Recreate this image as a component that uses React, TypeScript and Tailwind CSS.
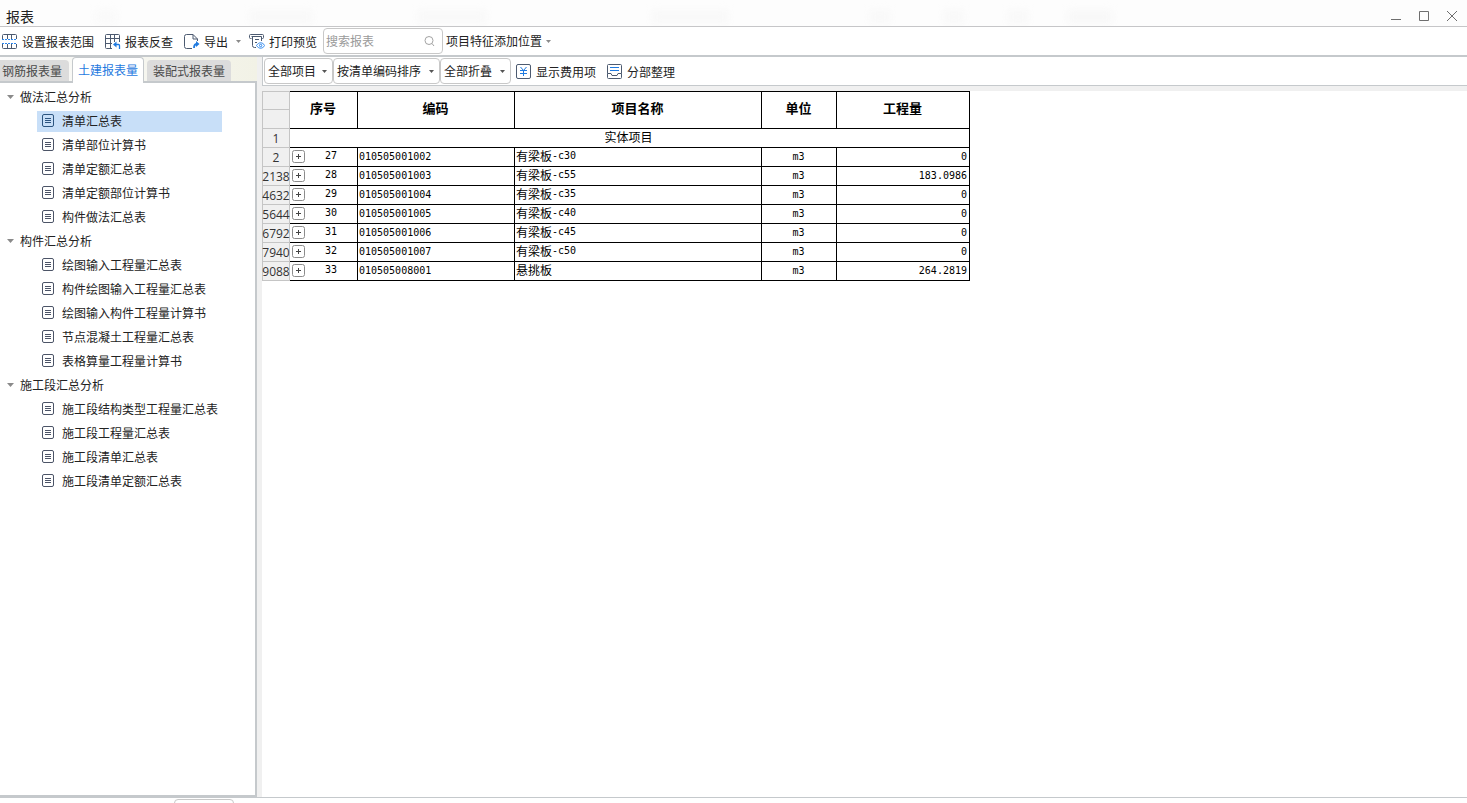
import React from "react";

const groups = [
  { name: "做法汇总分析", items: ["清单汇总表", "清单部位计算书", "清单定额汇总表", "清单定额部位计算书", "构件做法汇总表"] },
  { name: "构件汇总分析", items: ["绘图输入工程量汇总表", "构件绘图输入工程量汇总表", "绘图输入构件工程量计算书", "节点混凝土工程量汇总表", "表格算量工程量计算书"] },
  { name: "施工段汇总分析", items: ["施工段结构类型工程量汇总表", "施工段工程量汇总表", "施工段清单汇总表", "施工段清单定额汇总表"] },
];

const rows = [
  { line: "2", no: "27", code: "010505001002", name: ["有梁板", "-c30"], qty: "0" },
  { line: "2138", no: "28", code: "010505001003", name: ["有梁板", "-c55"], qty: "183.0986" },
  { line: "4632", no: "29", code: "010505001004", name: ["有梁板", "-c35"], qty: "0" },
  { line: "5644", no: "30", code: "010505001005", name: ["有梁板", "-c40"], qty: "0" },
  { line: "6792", no: "31", code: "010505001006", name: ["有梁板", "-c45"], qty: "0" },
  { line: "7940", no: "32", code: "010505001007", name: ["有梁板", "-c50"], qty: "0" },
  { line: "9088", no: "33", code: "010505008001", name: ["悬挑板", ""], qty: "264.2819" },
];

function Caret({ className = "" }: { className?: string }) {
  return (
    <svg width="5" height="3" viewBox="0 0 5 3" className={"shrink-0 " + className} aria-hidden="true">
      <path d="M0 0h5L2.5 3z" fill="currentColor" />
    </svg>
  );
}

function RangeIcon() {
  return (
    <svg width="16" height="16" viewBox="0 0 16 16" fill="none" aria-hidden="true" className="shrink-0">
      <path d="M.5 6V2.500a1 1 0 0 1 1-1h12a1 1 0 0 1 1 1V6M5.500 1.500V6M9.500 1.500V6M.5 11v3.500a1 1 0 0 0 1 1h12a1 1 0 0 0 1-1V11M5.500 11v4.500M9.500 11v4.500" stroke="#4c5a70" />
      <path d="M0 6.500h15M0 10.500h15" stroke="#2b86ee" strokeDasharray="2 1" />
    </svg>
  );
}

function TraceIcon() {
  return (
    <svg width="16" height="16" viewBox="0 0 16 16" fill="none" aria-hidden="true" className="shrink-0">
      <path d="M7 15.500H1.500a1 1 0 0 1-1-1v-12a1 1 0 0 1 1-1h12a1 1 0 0 1 1 1V9M.5 5.500h14M.5 10.500H7M5.500 1.500v14M9.500 1.500V9" stroke="#4c5a70" />
      <path d="M10 11.500h3.500a1 1 0 0 1 1 1V16" stroke="#1f7ae0" strokeWidth="1.300" />
      <path d="M11.500 8.500v6l-3.500-3z" fill="#1f7ae0" />
    </svg>
  );
}

function ExportIcon() {
  return (
    <svg width="16" height="16" viewBox="0 0 16 16" fill="none" aria-hidden="true" className="shrink-0">
      <path d="M8 15.500H2.500a2 2 0 0 1-2-2v-10a2 2 0 0 1 2-2H9L13.500 6v2M9 1.500V6h4.500" stroke="#4c5a70" />
      <path d="M10 15c0-2.800 1-4 3-4" stroke="#1f7ae0" strokeWidth="1.800" />
      <path d="M12 8l3.500 3-3.500 3z" fill="#1f7ae0" />
    </svg>
  );
}

function PreviewIcon() {
  return (
    <svg width="16" height="16" viewBox="0 0 16 16" fill="none" aria-hidden="true" className="shrink-0">
      <path d="M2.500 5.500h-1a1 1 0 0 1-1-1v-2a1 1 0 0 1 1-1h12a1 1 0 0 1 1 1v2a1 1 0 0 1-1 1h-1M2.500 3.500h10V8M3.500 3.500v9a2 2 0 0 0 2 2H7M6 6.500h4M6 9.500h2" stroke="#4c5a70" />
      <path d="M7.500 12.500c2.300-3.600 5.900-3.600 8.200 0-2.300 3.600-5.900 3.600-8.200 0z" stroke="#2b86ee" />
      <circle cx="11.600" cy="12.500" r="1.200" stroke="#2b86ee" />
    </svg>
  );
}

function YenIcon() {
  return (
    <svg width="15" height="15" viewBox="0 0 15 15" fill="none" aria-hidden="true" className="shrink-0">
      <rect x=".5" y=".5" width="14" height="14" rx="1.500" stroke="#4c5a70" />
      <path d="M4.500 3l3 3.500L10.500 3M4 6.500h7M4 9.500h7M7.500 6.500V12" stroke="#1f7ae0" />
    </svg>
  );
}

function ArrangeIcon() {
  return (
    <svg width="15" height="15" viewBox="0 0 15 15" fill="none" aria-hidden="true" className="shrink-0">
      <path d="M.5 9.500v-8a1 1 0 0 1 1-1h12a1 1 0 0 1 1 1v8M.5 9.500H4l1 2h5l1-2h3.500v4a1 1 0 0 1-1 1h-12a1 1 0 0 1-1-1z" stroke="#4c5a70" />
      <path d="M3 3.500h9M3 6.500h9" stroke="#1f7ae0" />
    </svg>
  );
}

function SheetIcon() {
  return (
    <svg width="12" height="15" viewBox="0 0 12 15" fill="none" aria-hidden="true" className="shrink-0">
      <rect x=".5" y=".5" width="11" height="12" rx="1.500" stroke="currentColor" />
      <path d="M3 4.500h6M3 6.500h6M3 8.500h6" stroke="currentColor" />
    </svg>
  );
}

function TitleBar() {
  return (
    <header className="flex h-[27px] shrink-0 items-center justify-between overflow-hidden border-b border-[#c6c6c8] bg-[#fdfdfd] pr-[9px] pl-1.5">
      <h1 className="pt-1.5 text-sm leading-5">报表</h1>
      <div aria-hidden="true" className="flex flex-1 pt-2 pl-[62px]">
        <div className="h-3 w-5 bg-[#f9f9f9] blur-xs" />
        <div className="ml-[134px] h-3 w-[62px] bg-[#f8f8f8] blur-xs" />
        <div className="ml-[106px] h-3 w-[68px] bg-[#f8f8f8] blur-xs" />
        <div className="ml-[166px] h-3 w-[76px] bg-[#f8f8f8] blur-xs" />
        <div className="ml-[142px] h-3 w-5 bg-[#f8f8f8] blur-xs" />
        <div className="ml-[54px] h-3 w-5 bg-[#f8f8f8] blur-xs" />
        <div className="ml-[44px] h-3 w-5 bg-[#f8f8f8] blur-xs" />
        <div className="ml-10 h-3 w-11 bg-[#f7f7f7] blur-xs" />
      </div>
      <div className="flex gap-4 pt-1.5 text-[#6e6e6e]">
        <button aria-label="最小化" className="size-3">
          <svg width="12" height="12" viewBox="0 0 12 12"><path d="M1 9.500h10" stroke="currentColor" /></svg>
        </button>
        <button aria-label="最大化" className="size-3">
          <svg width="12" height="12" viewBox="0 0 12 12" fill="none"><path d="M1.500 1.500h9v9h-9z" stroke="currentColor" /></svg>
        </button>
        <button aria-label="关闭" className="size-3">
          <svg width="12" height="12" viewBox="0 0 12 12"><path d="M1 1l10 10M11 1L1 11" stroke="currentColor" /></svg>
        </button>
      </div>
    </header>
  );
}

function Label({ children }: { children: React.ReactNode }) {
  return <span className="pt-0.5">{children}</span>;
}

function Toolbar() {
  return (
    <div className="flex h-[30px] shrink-0 items-center border-b-2 border-[#c5c9cc] bg-white pl-0.5 whitespace-nowrap">
      <button className="flex items-center gap-1"><RangeIcon /><Label>设置报表范围</Label></button>
      <button className="ml-[11px] flex items-center gap-1"><TraceIcon /><Label>报表反查</Label></button>
      <button className="ml-[11px] flex items-center gap-1"><ExportIcon /><Label>导出</Label><Caret className="ml-1 text-[#8a8a8a]" /></button>
      <button className="ml-2 flex items-center gap-1"><PreviewIcon /><Label>打印预览</Label></button>
      <label className="ml-1.5 flex h-[26px] w-[120px] items-center rounded border border-[#c8c8c8] px-0.5">
        <input aria-label="搜索报表" placeholder="搜索报表" className="w-24 min-w-0 flex-1 bg-transparent outline-none placeholder:text-[#9a9a9a]" />
        <svg width="12" height="12" viewBox="0 0 12 12" fill="none" aria-hidden="true" className="mr-1 shrink-0">
          <circle cx="5" cy="5.500" r="4" stroke="#a3a3a3" />
          <path d="M8 8.500L10 11" stroke="#a3a3a3" />
        </svg>
      </label>
      <button className="ml-[3px] flex items-center gap-1">项目特征添加位置<Caret className="text-[#8a8a8a]" /></button>
    </div>
  );
}

function Sidebar() {
  return (
    <aside className="flex w-[257px] shrink-0 flex-col">
      <div role="tablist" className="flex h-6 items-end gap-[3px] bg-linear-to-r from-[#fbfbfb] to-[#f2f2e6] whitespace-nowrap">
        <button role="tab" className="h-[21px] w-[69px] rounded-tr bg-[#dcdcdc] pl-0.5 text-left text-[#4a4a4a]">钢筋报表量</button>
        <button role="tab" aria-selected="true" className="relative -mb-0.5 h-[26px] w-[72px] rounded-t border border-b-0 border-[#c5c9cc] bg-white pb-0.5 text-center text-[#1f7ae0]">土建报表量</button>
        <button role="tab" className="h-[21px] w-[84px] rounded-t bg-[#dcdcdc] text-center text-[#4a4a4a]">装配式报表量</button>
      </div>
      <nav className="flex-1 border-t-2 border-r-2 border-b-2 border-[#c5c9cc] bg-white pt-0.5">
        {groups.map((g, gi) => (
          <section key={g.name}>
            <h2 className="flex h-6 items-center gap-[6px] pl-[7px]">
              <svg width="7" height="4" viewBox="0 0 7 4" aria-hidden="true"><path d="M0 0h7L3.500 4z" fill="#8a8a8a" /></svg>
              {g.name}
            </h2>
            <ul>
              {g.items.map((item, i) => (
                <li key={item} className="flex h-6 items-center">
                  <a
                    href="#"
                    className={
                      gi === 0 && i === 0
                        ? "ml-[37px] flex h-[21px] w-[185px] items-center gap-2 bg-[#c8dff8] pl-[5px] text-[#2d5580]"
                        : "ml-[37px] flex h-[21px] w-[185px] items-center gap-2 pl-[5px] text-[#4c5467]"
                    }
                  >
                    <SheetIcon />
                    <span className="whitespace-nowrap text-[#222]">{item}</span>
                  </a>
                </li>
              ))}
            </ul>
          </section>
        ))}
      </nav>
    </aside>
  );
}

const filter = "flex h-[26px] items-center justify-between rounded border border-[#c8c8c8] pr-[5px] pl-[3px]";

function Report() {
  return (
    <main className="flex min-w-0 flex-1 flex-col">
      <div className="flex h-[29px] shrink-0 items-center border-b border-l border-[#c5c9cc] bg-white pl-px whitespace-nowrap">
        <button className={filter + " w-[69px]"}>全部项目<Caret className="text-[#555]" /></button>
        <button className={filter + " w-[107px]"}>按清单编码排序<Caret className="text-[#555]" /></button>
        <button className={filter + " w-[71px]"}>全部折叠<Caret className="text-[#555]" /></button>
        <button className="ml-[5px] flex items-center gap-[5px]"><YenIcon /><Label>显示费用项</Label></button>
        <button className="ml-[11px] flex items-center gap-[5px]"><ArrangeIcon /><Label>分部整理</Label></button>
      </div>
      <div className="flex-1 border-t-5 border-[#f0f0f0] bg-white">
        <table className="w-[708px] table-fixed border-separate border-spacing-0 bg-white text-black">
          <colgroup>
            <col className="w-[28px]" /><col className="w-[68px]" /><col className="w-[157px]" />
            <col className="w-[247px]" /><col className="w-[75px]" /><col className="w-[133px]" />
          </colgroup>
          <thead>
            <tr className="h-[19px] text-[13px]">
              <td className="border border-[#c5c5c5] bg-[#f0f0f0] p-0" />
              {["序号", "编码", "项目名称", "单位", "工程量"].map((h) => (
                <th key={h} rowSpan={2} scope="col" className="border-t border-r border-b border-black p-0 pr-px pb-1 font-bold">{h}</th>
              ))}
            </tr>
            <tr className="h-[19px]">
              <td className="border border-t-0 border-[#c5c5c5] bg-[#f0f0f0] p-0" />
            </tr>
          </thead>
          <tbody className="leading-4">
            <tr className="h-[19px]">
              <LineNo n="1" />
              <td colSpan={5} className="border-r border-b border-black p-0 pr-0.5 pb-0.5 text-center">实体项目</td>
            </tr>
            {rows.map((r) => (
              <tr key={r.line} className="h-[19px]">
                <LineNo n={r.line} />
                <td className="border-r border-b border-black p-0 pb-0.5">
                  <div className="flex h-4 items-center pl-0.5">
                    <button aria-label="展开" className="size-[13px]">
                      <svg width="13" height="13" viewBox="0 0 13 13" fill="none">
                        <rect x=".5" y=".5" width="12" height="12" rx="2" stroke="#8c8c8c" />
                        <path d="M4 6.500h5M6.500 4v5" stroke="#444" />
                      </svg>
                    </button>
                    <Mono className="flex-1 text-center">{r.no}</Mono>
                  </div>
                </td>
                <td className="border-r border-b border-black p-0 pl-px"><Mono>{r.code}</Mono></td>
                <td className="border-r border-b border-black p-0 pb-0.5 pl-px">
                  <div className="flex h-4 items-center">{r.name[0]}<Mono>{r.name[1]}</Mono></div>
                </td>
                <td className="border-r border-b border-black p-0 pr-px text-center"><Mono>m3</Mono></td>
                <td className="border-r border-b border-black p-0 pr-0.5 text-right"><Mono>{r.qty}</Mono></td>
              </tr>
            ))}
          </tbody>
        </table>
      </div>
    </main>
  );
}

function Mono({ children, className = "" }: { children: React.ReactNode; className?: string }) {
  return <span className={"block font-['DejaVu_Sans_Mono',monospace] text-[10px] leading-[18px] " + className}>{children}</span>;
}

function LineNo({ n }: { n: string }) {
  return (
    <th scope="row" className="border-r border-b border-l border-[#c5c5c5] bg-[#f0f0f0] p-0 font-['Open_Sans','Noto_Sans_CJK_SC',sans-serif] font-normal text-[#333]">
      <span className="flex h-[18px] items-center justify-center pt-0.5">{n}</span>
    </th>
  );
}

export default function App() {
  return (
    <div className="flex min-h-screen flex-col bg-white font-['Noto_Sans_CJK_SC',sans-serif] text-xs text-[#222]">
      <TitleBar />
      <Toolbar />
      <div className="flex flex-1 border-b border-[#c5c9cc]">
        <Sidebar />
        <div className="w-[5px] shrink-0 bg-[#f0f0f0]" />
        <Report />
      </div>
      <footer className="h-[5px] shrink-0 overflow-hidden pt-px pl-[174px]">
        <div className="h-5 w-[60px] rounded border border-[#c8c8c8]" />
      </footer>
    </div>
  );
}
